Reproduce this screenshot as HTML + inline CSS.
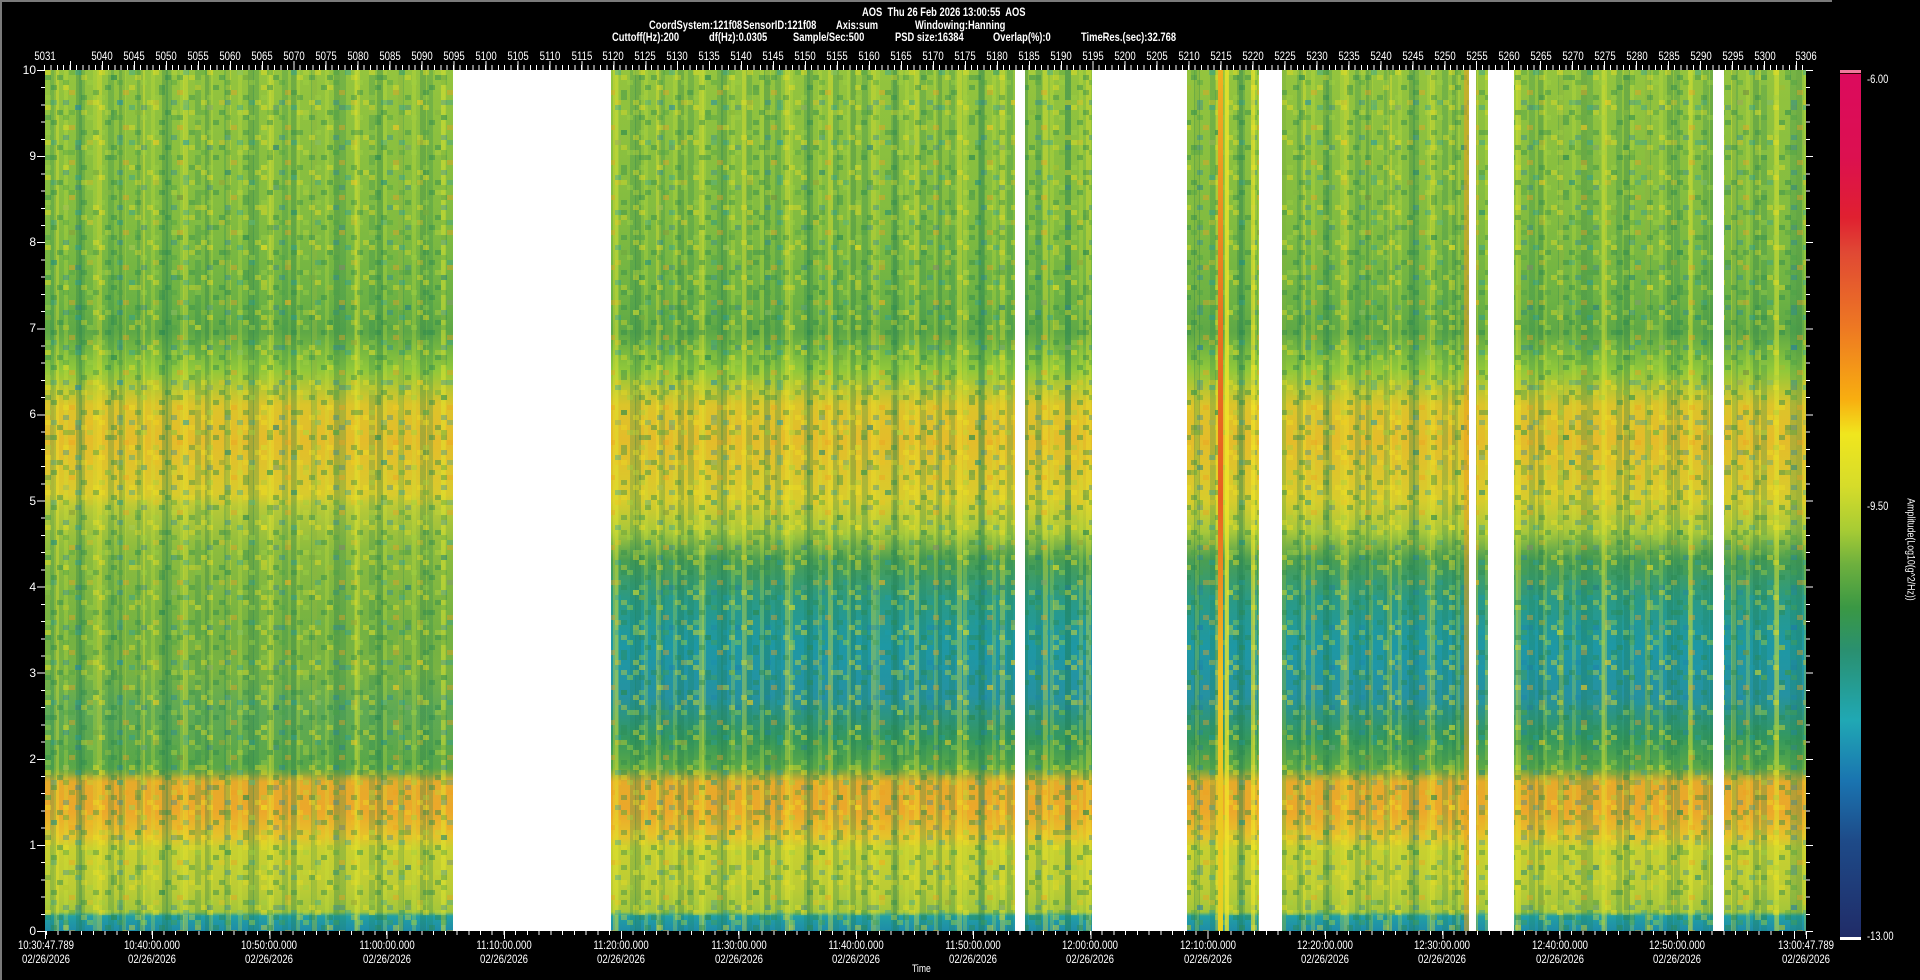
<!DOCTYPE html>
<html><head><meta charset="utf-8">
<style>
html,body{margin:0;padding:0;background:#000;}
body{width:1920px;height:980px;position:relative;overflow:hidden;font-family:"Liberation Sans Narrow","Liberation Sans",sans-serif;color:#fff;font-weight:bold;font-size:12px;}
.a{position:absolute;white-space:pre;line-height:1;}
.n{transform:scaleX(0.78);transform-origin:0 0;}
.c{transform:scaleX(0.8);transform-origin:50% 0;}
#plot{position:absolute;left:45px;top:70px;width:1761px;height:861px;overflow:hidden;
background:linear-gradient(180deg,#94c43e 0px,#82bc40 150px,#6cb244 230px,#5ea846 262px,#90c83a 300px,#dcc42a 335px,#e4bc2a 370px,#d8cc2c 430px,#a8c83a 462px,#4a9e52 490px,#2a9a86 530px,#1e98a4 575px,#2592a2 625px,#34985e 668px,#5aa846 698px,#e6aa2a 712px,#eca82a 742px,#e6c22a 766px,#c8d030 778px,#bccc34 818px,#a4c63a 842px,#22a0a4 846px,#1e8ca8 861px);}
.strA{position:absolute;top:0;height:861px;}
.gap{position:absolute;top:0;height:861px;background:#fff;}
.tk{position:absolute;}
.bl .a{line-height:14px;}
</style></head><body>
<div class="a" style="left:0;top:0;width:1832px;height:2px;background:#7a7a7a"></div>
<div class="a" style="left:0;top:0;width:2px;height:980px;background:#7a7a7a"></div>

<div class="a n" style="left:862px;top:6px">AOS  Thu 26 Feb 2026 13:00:55  AOS</div>
<div class="a n" style="left:649px;top:19px">CoordSystem:121f08</div>
<div class="a n" style="left:743px;top:19px">SensorID:121f08</div>
<div class="a n" style="left:836px;top:19px">Axis:sum</div>
<div class="a n" style="left:915px;top:19px">Windowing:Hanning</div>
<div class="a n" style="left:612px;top:31px">Cuttoff(Hz):200</div>
<div class="a n" style="left:709px;top:31px">df(Hz):0.0305</div>
<div class="a n" style="left:793px;top:31px">Sample/Sec:500</div>
<div class="a n" style="left:895px;top:31px">PSD size:16384</div>
<div class="a n" style="left:993px;top:31px">Overlap(%):0</div>
<div class="a n" style="left:1081px;top:31px">TimeRes.(sec):32.768</div>

<div id="plot">
  <div class="strA" style="left:0;width:408px;background:linear-gradient(180deg,transparent 0,transparent 425px,#b4c838 440px,#8cbc3e 480px,#74b242 560px,#7cb442 640px,#5ca846 690px,transparent 708px)"></div>
  <div class="strA" style="left:0;width:408px;background:linear-gradient(180deg,transparent 600px,rgba(40,150,120,.35) 640px,transparent 700px)"></div>
  <div class="strA" style="left:0;width:1761px;background:repeating-linear-gradient(90deg,transparent 0 9px,rgba(240,230,40,.35) 9px 14px,transparent 14px 31px,rgba(30,120,80,.3) 31px 37px,transparent 37px 43px)"></div>
  <div class="strA" style="left:0;width:1761px;background:repeating-linear-gradient(90deg,transparent 0 5px,rgba(30,130,90,.25) 5px 11px,transparent 11px 19px,rgba(210,230,50,.25) 19px 23px,transparent 23px 29px)"></div>
  <svg class="strA" style="left:0;width:1761px" width="1761" height="861">
    <defs>
      <pattern id="p1" width="54" height="35" patternUnits="userSpaceOnUse">
        <rect x="0" y="0" width="6" height="5" fill="#f0e020" opacity=".45"/>
        <rect x="12" y="5" width="6" height="5" fill="#2a8a50" opacity=".45"/>
        <rect x="30" y="0" width="6" height="5" fill="#1a9ab0" opacity=".35"/>
        <rect x="42" y="10" width="6" height="5" fill="#a0d040" opacity=".45"/>
        <rect x="6" y="15" width="6" height="5" fill="#2a8a50" opacity=".45"/>
        <rect x="24" y="20" width="6" height="5" fill="#f0a020" opacity=".4"/>
        <rect x="36" y="25" width="6" height="5" fill="#2a8a50" opacity=".4"/>
        <rect x="48" y="30" width="6" height="5" fill="#f0e020" opacity=".4"/>
        <rect x="18" y="30" width="6" height="5" fill="#1a80b0" opacity=".35"/>
        <rect x="0" y="25" width="6" height="5" fill="#a0d040" opacity=".4"/>
        <rect x="36" y="5" width="6" height="5" fill="#f0e020" opacity=".35"/>
        <rect x="18" y="10" width="6" height="5" fill="#48a048" opacity=".4"/>
      </pattern>
      <pattern id="p2" width="66" height="40" patternUnits="userSpaceOnUse">
        <rect x="0" y="5" width="6" height="5" fill="#2a8a50" opacity=".4"/>
        <rect x="18" y="15" width="6" height="5" fill="#f0e020" opacity=".4"/>
        <rect x="30" y="35" width="6" height="5" fill="#1a70b0" opacity=".3"/>
        <rect x="48" y="20" width="6" height="5" fill="#2a8a50" opacity=".4"/>
        <rect x="60" y="0" width="6" height="5" fill="#c0d838" opacity=".4"/>
        <rect x="42" y="30" width="6" height="5" fill="#f0c020" opacity=".35"/>
        <rect x="6" y="30" width="6" height="5" fill="#1a9ab0" opacity=".3"/>
        <rect x="24" y="0" width="6" height="5" fill="#48a048" opacity=".4"/>
      </pattern>
    </defs>
    <rect width="1761" height="861" fill="url(#p1)"/>
    <rect width="1761" height="861" fill="url(#p2)"/>
  </svg>
  <div class="strA" style="left:1173px;width:5px;background:linear-gradient(180deg,#f0b020,#e87020 30%,#e86020 50%,#f0c020 70%,#e8d020)"></div>
  <div class="strA" style="left:1180px;width:4px;background:rgba(245,230,40,.7)"></div>
  <div class="strA" style="left:1206px;width:4px;background:rgba(245,230,40,.6)"></div>
  <div class="strA" style="left:1419px;width:5px;background:rgba(235,160,30,.55)"></div>
  <div class="gap" style="left:408px;width:158px"></div>
  <div class="gap" style="left:970px;width:10px"></div>
  <div class="gap" style="left:1047px;width:95px"></div>
  <div class="gap" style="left:1214px;width:23px"></div>
  <div class="gap" style="left:1424px;width:7px"></div>
  <div class="gap" style="left:1443px;width:26px"></div>
  <div class="gap" style="left:1668px;width:11px"></div>
</div>

<div class="tk" style="left:44px;top:65px;width:1763px;height:5px;background:repeating-linear-gradient(90deg,#fff 0 1px,transparent 1px 6.392px)"></div>
<div class="tk" style="left:69.6px;top:61px;width:1737px;height:9px;background:repeating-linear-gradient(90deg,#fff 0 1px,transparent 1px 31.96px)"></div>
<div class="tk" style="left:41px;top:70px;width:4px;height:862px;background:repeating-linear-gradient(180deg,#fff 0 1px,transparent 1px 17.22px)"></div>
<div class="tk" style="left:37px;top:70px;width:8px;height:862px;background:repeating-linear-gradient(180deg,#fff 0 1px,transparent 1px 86.1px)"></div>
<div class="tk" style="left:1806px;top:70px;width:4px;height:862px;background:repeating-linear-gradient(180deg,#fff 0 1px,transparent 1px 17.22px)"></div>
<div class="tk" style="left:1806px;top:70px;width:7px;height:862px;background:repeating-linear-gradient(180deg,#fff 0 1px,transparent 1px 86.1px)"></div>
<div class="tk" style="left:46.4px;top:931px;width:1760px;height:4px;background:repeating-linear-gradient(90deg,#fff 0 1px,transparent 1px 11.73px)"></div>
<div class="tk" style="left:152px;top:931px;width:1650px;height:8px;background:repeating-linear-gradient(90deg,#fff 0 1px,transparent 1px 117.3px)"></div>
<div class="tk" style="left:45px;top:931px;width:1px;height:8px;background:#fff"></div>
<div class="tk" style="left:1806px;top:931px;width:1px;height:8px;background:#fff"></div>

<div class="a" style="left:14px;top:64px;width:22px;text-align:right;font-weight:normal">10</div>
<div class="a" style="left:14px;top:150px;width:22px;text-align:right;font-weight:normal">9</div>
<div class="a" style="left:14px;top:236px;width:22px;text-align:right;font-weight:normal">8</div>
<div class="a" style="left:14px;top:322px;width:22px;text-align:right;font-weight:normal">7</div>
<div class="a" style="left:14px;top:408px;width:22px;text-align:right;font-weight:normal">6</div>
<div class="a" style="left:14px;top:495px;width:22px;text-align:right;font-weight:normal">5</div>
<div class="a" style="left:14px;top:581px;width:22px;text-align:right;font-weight:normal">4</div>
<div class="a" style="left:14px;top:667px;width:22px;text-align:right;font-weight:normal">3</div>
<div class="a" style="left:14px;top:753px;width:22px;text-align:right;font-weight:normal">2</div>
<div class="a" style="left:14px;top:839px;width:22px;text-align:right;font-weight:normal">1</div>
<div class="a" style="left:14px;top:925px;width:22px;text-align:right;font-weight:normal">0</div>

<div style="position:absolute;left:0;top:50px;font-weight:normal">
<div class="a c" style="left:30px;width:30px;text-align:center">5031</div>
<div class="a c" style="left:87px;width:30px;text-align:center">5040</div>
<div class="a c" style="left:119px;width:30px;text-align:center">5045</div>
<div class="a c" style="left:151px;width:30px;text-align:center">5050</div>
<div class="a c" style="left:183px;width:30px;text-align:center">5055</div>
<div class="a c" style="left:215px;width:30px;text-align:center">5060</div>
<div class="a c" style="left:247px;width:30px;text-align:center">5065</div>
<div class="a c" style="left:279px;width:30px;text-align:center">5070</div>
<div class="a c" style="left:311px;width:30px;text-align:center">5075</div>
<div class="a c" style="left:343px;width:30px;text-align:center">5080</div>
<div class="a c" style="left:375px;width:30px;text-align:center">5085</div>
<div class="a c" style="left:407px;width:30px;text-align:center">5090</div>
<div class="a c" style="left:439px;width:30px;text-align:center">5095</div>
<div class="a c" style="left:471px;width:30px;text-align:center">5100</div>
<div class="a c" style="left:503px;width:30px;text-align:center">5105</div>
<div class="a c" style="left:535px;width:30px;text-align:center">5110</div>
<div class="a c" style="left:567px;width:30px;text-align:center">5115</div>
<div class="a c" style="left:598px;width:30px;text-align:center">5120</div>
<div class="a c" style="left:630px;width:30px;text-align:center">5125</div>
<div class="a c" style="left:662px;width:30px;text-align:center">5130</div>
<div class="a c" style="left:694px;width:30px;text-align:center">5135</div>
<div class="a c" style="left:726px;width:30px;text-align:center">5140</div>
<div class="a c" style="left:758px;width:30px;text-align:center">5145</div>
<div class="a c" style="left:790px;width:30px;text-align:center">5150</div>
<div class="a c" style="left:822px;width:30px;text-align:center">5155</div>
<div class="a c" style="left:854px;width:30px;text-align:center">5160</div>
<div class="a c" style="left:886px;width:30px;text-align:center">5165</div>
<div class="a c" style="left:918px;width:30px;text-align:center">5170</div>
<div class="a c" style="left:950px;width:30px;text-align:center">5175</div>
<div class="a c" style="left:982px;width:30px;text-align:center">5180</div>
<div class="a c" style="left:1014px;width:30px;text-align:center">5185</div>
<div class="a c" style="left:1046px;width:30px;text-align:center">5190</div>
<div class="a c" style="left:1078px;width:30px;text-align:center">5195</div>
<div class="a c" style="left:1110px;width:30px;text-align:center">5200</div>
<div class="a c" style="left:1142px;width:30px;text-align:center">5205</div>
<div class="a c" style="left:1174px;width:30px;text-align:center">5210</div>
<div class="a c" style="left:1206px;width:30px;text-align:center">5215</div>
<div class="a c" style="left:1238px;width:30px;text-align:center">5220</div>
<div class="a c" style="left:1270px;width:30px;text-align:center">5225</div>
<div class="a c" style="left:1302px;width:30px;text-align:center">5230</div>
<div class="a c" style="left:1334px;width:30px;text-align:center">5235</div>
<div class="a c" style="left:1366px;width:30px;text-align:center">5240</div>
<div class="a c" style="left:1398px;width:30px;text-align:center">5245</div>
<div class="a c" style="left:1430px;width:30px;text-align:center">5250</div>
<div class="a c" style="left:1462px;width:30px;text-align:center">5255</div>
<div class="a c" style="left:1494px;width:30px;text-align:center">5260</div>
<div class="a c" style="left:1526px;width:30px;text-align:center">5265</div>
<div class="a c" style="left:1558px;width:30px;text-align:center">5270</div>
<div class="a c" style="left:1590px;width:30px;text-align:center">5275</div>
<div class="a c" style="left:1622px;width:30px;text-align:center">5280</div>
<div class="a c" style="left:1654px;width:30px;text-align:center">5285</div>
<div class="a c" style="left:1686px;width:30px;text-align:center">5290</div>
<div class="a c" style="left:1718px;width:30px;text-align:center">5295</div>
<div class="a c" style="left:1750px;width:30px;text-align:center">5300</div>
<div class="a c" style="left:1791px;width:30px;text-align:center">5306</div>
</div>

<div class="bl" style="position:absolute;left:0;top:938px;font-weight:normal">
<div class="a c" style="left:-4px;width:100px;text-align:center">10:30:47.789
02/26/2026</div>
<div class="a c" style="left:102px;width:100px;text-align:center">10:40:00.000
02/26/2026</div>
<div class="a c" style="left:219px;width:100px;text-align:center">10:50:00.000
02/26/2026</div>
<div class="a c" style="left:337px;width:100px;text-align:center">11:00:00.000
02/26/2026</div>
<div class="a c" style="left:454px;width:100px;text-align:center">11:10:00.000
02/26/2026</div>
<div class="a c" style="left:571px;width:100px;text-align:center">11:20:00.000
02/26/2026</div>
<div class="a c" style="left:689px;width:100px;text-align:center">11:30:00.000
02/26/2026</div>
<div class="a c" style="left:806px;width:100px;text-align:center">11:40:00.000
02/26/2026</div>
<div class="a c" style="left:923px;width:100px;text-align:center">11:50:00.000
02/26/2026</div>
<div class="a c" style="left:1040px;width:100px;text-align:center">12:00:00.000
02/26/2026</div>
<div class="a c" style="left:1158px;width:100px;text-align:center">12:10:00.000
02/26/2026</div>
<div class="a c" style="left:1275px;width:100px;text-align:center">12:20:00.000
02/26/2026</div>
<div class="a c" style="left:1392px;width:100px;text-align:center">12:30:00.000
02/26/2026</div>
<div class="a c" style="left:1510px;width:100px;text-align:center">12:40:00.000
02/26/2026</div>
<div class="a c" style="left:1627px;width:100px;text-align:center">12:50:00.000
02/26/2026</div>
<div class="a c" style="left:1756px;width:100px;text-align:center">13:00:47.789
02/26/2026</div>
</div>
<div class="a n" style="left:912px;top:964px;font-weight:normal;font-size:11px">Time</div>

<div class="a" style="left:1840px;top:70px;width:21px;height:867px;background:linear-gradient(180deg,#dc0a5e 0%,#dc1050 10%,#e02030 17%,#e04834 21%,#ee7a22 30%,#f8ae10 38%,#f0e61e 42%,#d6dc2a 48%,#a8cc34 53%,#6eb03e 57%,#3a9844 62%,#2a9070 67%,#20a8b4 75%,#1a74b0 82%,#1e4a88 89%,#202c68 100%)"></div>
<div class="a" style="left:1840px;top:70px;width:21px;height:3px;background:#f07a9c"></div>
<div class="a" style="left:1840px;top:73px;width:21px;height:1px;background:#300"></div>
<div class="a" style="left:1840px;top:937px;width:21px;height:3px;background:#fff"></div>
<div class="a n" style="left:1867px;top:73px;font-weight:normal">-6.00</div>
<div class="a n" style="left:1867px;top:500px;font-weight:normal">-9.50</div>
<div class="a n" style="left:1867px;top:930px;font-weight:normal">-13.00</div>
<div class="a" style="left:1830px;top:544px;width:160px;text-align:center;transform:rotate(90deg) scaleX(0.8);font-weight:normal;font-size:11px">Amplitude(Log10(g^2/Hz))</div>
</body></html>
